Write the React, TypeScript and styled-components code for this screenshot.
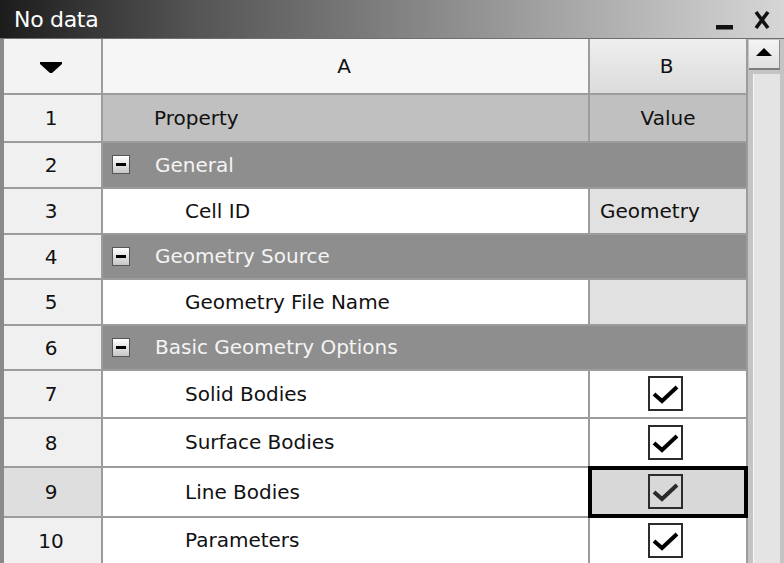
import React from "react";
import styled, { createGlobalStyle, css } from "styled-components";

const GlobalStyle = createGlobalStyle`
  html, body {
    margin: 0;
    padding: 0;
    overflow: hidden;
    background: #9c9c9c;
  }
  body {
    font-family: "DejaVu Sans", "Liberation Sans", sans-serif;
  }
`;

type PropRow =
  | { kind: "category"; label: string }
  | { kind: "text"; label: string; value: string }
  | { kind: "check"; label: string; selected?: boolean };

const rows: PropRow[] = [
  { kind: "category", label: "General" },
  { kind: "text", label: "Cell ID", value: "Geometry" },
  { kind: "category", label: "Geometry Source" },
  { kind: "text", label: "Geometry File Name", value: "" },
  { kind: "category", label: "Basic Geometry Options" },
  { kind: "check", label: "Solid Bodies" },
  { kind: "check", label: "Surface Bodies" },
  { kind: "check", label: "Line Bodies", selected: true },
  { kind: "check", label: "Parameters" },
];

function App() {
  return (
    <>
      <GlobalStyle />
      <Window>
        <TitleBar>
          <Title>No data</Title>
          <TitleButtons>
            <svg width="18" height="6" viewBox="0 0 18 6">
              <rect x="0" y="1" width="17" height="4.5" fill="#111" />
            </svg>
            <svg width="16" height="20" viewBox="0 0 16 20">
              <path d="M2 2 L14 18 M14 2 L2 18" stroke="#111" strokeWidth="3.6" />
            </svg>
          </TitleButtons>
        </TitleBar>
        <Body>
          <Grid>
            <RowNum $header>
              <svg width="22" height="11" viewBox="0 0 22 11">
                <path d="M0 0 H22 V2 L12 11 H10 L0 2 Z" fill="#000" />
              </svg>
            </RowNum>
            <ColHeader>A</ColHeader>
            <ColHeader $shaded>B</ColHeader>

            <RowNum>1</RowNum>
            <Cell $tone="label" $indent={51}>Property</Cell>
            <Cell $tone="label" $center>Value</Cell>

            {rows.map((row, i) => {
              const n = i + 2;
              if (row.kind === "category") {
                return (
                  <React.Fragment key={n}>
                    <RowNum>{n}</RowNum>
                    <CategoryCell>
                      <Collapse />
                      <span>{row.label}</span>
                    </CategoryCell>
                  </React.Fragment>
                );
              }
              if (row.kind === "text") {
                return (
                  <React.Fragment key={n}>
                    <RowNum>{n}</RowNum>
                    <Cell $indent={82}>{row.label}</Cell>
                    <Cell $tone="readonly" $indent={10}>
                      {row.value}
                    </Cell>
                  </React.Fragment>
                );
              }
              return (
                <React.Fragment key={n}>
                  <RowNum $selected={row.selected}>{n}</RowNum>
                  <Cell $indent={82}>{row.label}</Cell>
                  <Cell $center $tone={row.selected ? "selected" : "white"}>
                    <CheckBox $selected={row.selected}>
                      <svg width="31" height="31" viewBox="0 0 31 31">
                        <polyline
                          points="4,16 12,23 27,9"
                          fill="none"
                          stroke={row.selected ? "#2a2a2a" : "#000"}
                          strokeWidth="4"
                        />
                      </svg>
                    </CheckBox>
                  </Cell>
                </React.Fragment>
              );
            })}
          </Grid>
          <Scrollbar>
            <ScrollButton>
              <svg width="16" height="8" viewBox="0 0 16 8">
                <path d="M8 0 L16 8 H0 Z" fill="#000" />
              </svg>
            </ScrollButton>
            <ScrollTrack />
          </Scrollbar>
        </Body>
      </Window>
    </>
  );
}

export default App;

const Window = styled.div`
  width: 784px;
  height: 563px;
  display: flex;
  flex-direction: column;
  overflow: hidden;
  background: #9c9c9c;
`;

const TitleBar = styled.div`
  height: 38px;
  flex: none;
  display: flex;
  align-items: center;
  padding: 0 14px 0 14px;
  background: linear-gradient(to right, #1c1c1c 0%, #555 25%, #9a9a9a 65%, #d6d6d6 100%);
  border-bottom: 1px solid #6e6e6e;
`;

const Title = styled.div`
  color: #fff;
  font-size: 22px;
  letter-spacing: -0.3px;
`;

const TitleButtons = styled.div`
  margin-left: auto;
  display: flex;
  align-items: center;
  gap: 20px;
  padding-top: 2px;

  svg:first-child {
    margin-top: 14px;
  }
`;

const Body = styled.div`
  flex: 1;
  min-height: 0;
  display: flex;
`;

const Grid = styled.div`
  display: grid;
  grid-template-columns: 97px 485px 156px;
  grid-template-rows: 54px 46px 44px 44px 43px 44px 43px 46px 47px 48px 45px;
  gap: 2px;
  align-content: start;
  background: #9c9c9c;
  border-left: 4px solid #8a8a8a;
  padding-right: 2px;
  font-size: 20px;
  color: #111;
`;

const RowNum = styled.div<{ $header?: boolean; $selected?: boolean }>`
  display: flex;
  align-items: center;
  justify-content: center;
  padding-right: 3px;
  background: ${({ $selected }) => ($selected ? "#dedede" : "#f0f0f0")};
  ${({ $header }) =>
    $header &&
    css`
      background: #f3f3f3;
      padding-top: 2px;
    `}
`;

const ColHeader = styled.div<{ $shaded?: boolean }>`
  display: flex;
  align-items: center;
  justify-content: center;
  padding-right: 3px;
  background: ${({ $shaded }) =>
    $shaded ? "linear-gradient(to bottom, #eeeeee, #dcdcdc)" : "#f6f6f6"};
`;

const tones = {
  white: "#ffffff",
  label: "#c0c0c0",
  readonly: "#e1e1e1",
  selected: "#d8d8d8",
};

const Cell = styled.div<{
  $tone?: keyof typeof tones;
  $indent?: number;
  $center?: boolean;
}>`
  display: flex;
  align-items: center;
  justify-content: ${({ $center }) => ($center ? "center" : "flex-start")};
  padding-left: ${({ $indent }) => ($indent ? `${$indent}px` : "0")};
  padding-bottom: 1px;
  background: ${({ $tone }) => tones[$tone || "white"]};
  white-space: nowrap;
  ${({ $tone }) =>
    $tone === "selected" &&
    css`
      position: relative;
      z-index: 1;
      outline: 4px solid #000;
      outline-offset: -2px;
    `}
`;

const CategoryCell = styled.div`
  grid-column: span 2;
  display: flex;
  align-items: center;
  gap: 25px;
  padding-left: 9px;
  padding-bottom: 1px;
  background: #8e8e8e;
  color: #f4f4f4;
`;

const Collapse = styled.span`
  position: relative;
  width: 16px;
  height: 17px;
  border: 1px solid #555;
  background: linear-gradient(to bottom, #ffffff, #c6c6c6);
  flex: none;

  &::after {
    content: "";
    position: absolute;
    left: 3px;
    right: 3px;
    top: 7px;
    height: 3px;
    background: #000;
  }
`;

const CheckBox = styled.div<{ $selected?: boolean }>`
  width: 31px;
  height: 31px;
  border: 2px solid #2c2c2c;
  background: ${({ $selected }) => ($selected ? "#d8d8d8" : "#fff")};
  display: flex;
  margin-left: -6px;
`;

const Scrollbar = styled.div`
  flex: 1;
  display: flex;
  flex-direction: column;
  background: #c4c4c4;
  padding: 1px 4px 0 1px;
`;

const ScrollButton = styled.div`
  height: 30px;
  display: flex;
  align-items: center;
  justify-content: center;
  background: linear-gradient(to bottom, #f4f4f4, #e0e0e0);
  border-right: 1px solid #8c8c8c;
  border-bottom: 2px solid #7c7c7c;
  padding-bottom: 4px;
  box-sizing: border-box;
`;

const ScrollTrack = styled.div`
  flex: 1;
  margin: 4px 0 0 4px;
  background: #e4e4e4;
  border-left: 1px solid #f6f6f6;
`;
